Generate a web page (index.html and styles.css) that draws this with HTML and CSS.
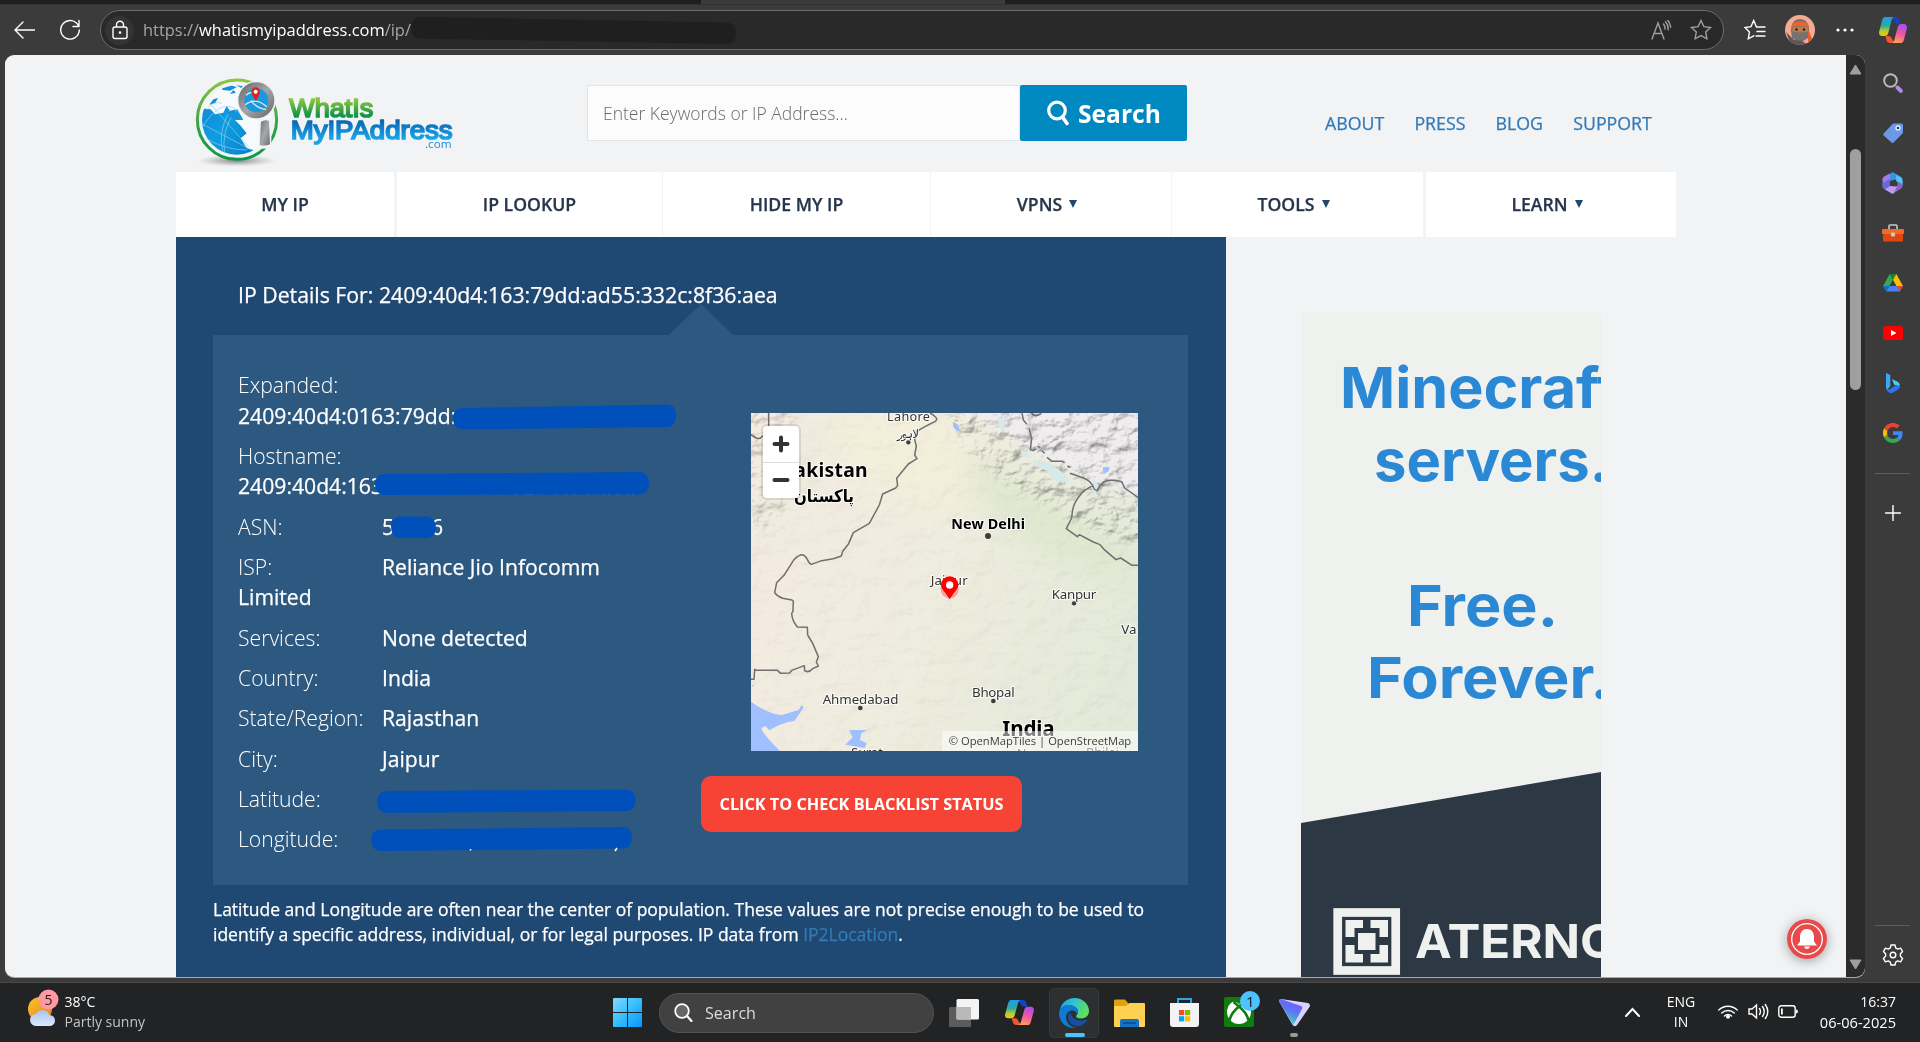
FILE: index.html
```html
<!DOCTYPE html>
<html lang="en">
<head>
<meta charset="utf-8">
<title>IP Details</title>
<link rel="stylesheet" href="styles.css">
</head>
<body>
<svg class="defs" width="0" height="0">
  <defs>
    <linearGradient id="cpA" x1="0" y1="0" x2="0" y2="1"><stop offset="0" stop-color="#1b9df0"/><stop offset=".45" stop-color="#2fa8a0"/><stop offset=".75" stop-color="#b6cf2e"/><stop offset="1" stop-color="#f7c60a"/></linearGradient>
    <linearGradient id="cpB" x1=".6" y1="0" x2=".3" y2="1"><stop offset="0" stop-color="#a850f0"/><stop offset=".5" stop-color="#f0589a"/><stop offset="1" stop-color="#fca35a"/></linearGradient>
    <symbol id="copilot" viewBox="0 0 28 26">
      <path d="M12 0h5c2 0 3 1 3.600 3l1 4h-3c-2 0-3-1-3.500-3Z" fill="#1640c8"/>
      <path d="M16 26h-5c-2 0-3-1-3.600-3l-1-4h3c2 0 3 1 3.500 3Z" fill="#f2552f"/>
      <path d="M6 0h9.500c-1.500 0-2.300 1-2.800 2.800L9.300 16c-.6 2-1.600 3-3.500 3H3C.8 19-.4 17 .2 14.500L3 3.500C3.600 1.200 4.500 0 6 0Z" fill="url(#cpA)"/>
      <path d="M22 26h-9.500c1.500 0 2.300-1 2.800-2.800L18.700 10c.6-2 1.600-3 3.500-3H25c2.200 0 3.400 2 2.800 4.500L25 22.500c-.6 2.300-1.500 3.500-3 3.500Z" fill="url(#cpB)"/>
    </symbol>
  </defs>
</svg>

<div class="tabstrip"><div class="tab-active"></div></div>

<div class="toolbar">
  <svg class="back" width="21" height="18" viewBox="0 0 21 18"><path d="M9 1 1 9l8 8M1 9h20" class="ln"/></svg>
  <svg class="reload" width="22" height="22" viewBox="0 0 22 22"><path d="M19.500 7A9.300 9.300 0 1 0 20.300 11M20 1.500V7.500H14" class="ln"/></svg>
  <div class="address">
    <span class="lock"><svg width="18" height="20" viewBox="0 0 18 20"><rect x="2" y="7" width="14" height="11.500" rx="2" class="ln"/><path d="M5.500 7V4.800a3.500 3.500 0 0 1 7 0V7" class="ln"/><circle cx="9" cy="12.600" r="1.300" fill="#fff"/></svg></span>
    <span class="url">https://<b>whatismyipaddress.com</b>/ip/</span>
    <svg class="url-mask" width="326" height="28" viewBox="0 0 326 28"><path d="M10 0 316 5.500q9 1 9 11t-9 10.500L8 21.500q-8-1-8-11T10 0Z" fill="#1f1f1f"/></svg>
    <div class="address-tools">
      <svg width="21" height="20" viewBox="0 0 21 20"><path d="M1 19 7 3l6 16M3.200 13.500h7.600M12.500 4a7 7 0 0 1 1.500 5M14.500 1.800a10 10 0 0 1 2.600 8M16.800.2a13 13 0 0 1 2.900 7" class="ln dim"/></svg>
      <svg width="22" height="22" viewBox="0 0 22 22"><path d="m11 1.500 2.900 6.100 6.600.9-4.800 4.600 1.200 6.700-5.900-3.200-5.900 3.200 1.200-6.700L1.500 8.500l6.600-.9Z" class="ln dim"/></svg>
    </div>
  </div>
  <div class="tools">
    <svg width="22" height="22" viewBox="0 0 22 22"><path d="M15.500 8h-3L9.700 1.500 7 7.600l-6 .9 4.400 4.600-1.100 6.700 5.400-3M14 8h7M13 12.500h8M12 17h9" class="ln"/></svg>
    <svg width="30" height="30" viewBox="0 0 30 30"><clipPath id="av"><circle cx="15" cy="15" r="15"/></clipPath><g clip-path="url(#av)"><rect width="30" height="30" fill="#f3ab92"/><path d="M6 16C6 8 9.500 4 15 4S24 8 24 15l-1 8-8 5-8-5Z" fill="#77716f"/><path d="M6.500 12C7 8 10 6.500 15 6.500S23 8 24 12q-9-3-17.500 0Z" fill="#f0632a"/><path d="M7.500 12.500q8-2.500 15.500 0v4q-7.500 2-15.500 0Z" fill="#b97b4c"/><circle cx="11.500" cy="14.500" r="1.200" fill="#2b1c14"/><circle cx="19" cy="14.500" r="1.200" fill="#2b1c14"/><path d="M23 14l4 10-4 3Z" fill="#e85a24"/><path d="M1 17 9 25l8 1 6 4H6Z" fill="#5a5756"/></g></svg>
    <svg width="18" height="4" viewBox="0 0 18 4"><circle cx="2" cy="2" r="1.600" fill="#fff"/><circle cx="9" cy="2" r="1.600" fill="#fff"/><circle cx="16" cy="2" r="1.600" fill="#fff"/></svg>
    <svg width="28" height="26"><use href="#copilot"/></svg>
  </div>
</div>

<div class="middle">
  <div class="viewport">
    <div class="web">
      <header class="site-header">
        <svg class="logo" width="290" height="100" viewBox="0 0 870 300">
          <defs>
            <linearGradient id="ring" x1="0" y1="0" x2="0" y2="1"><stop offset="0" stop-color="#8cc63f"/><stop offset=".6" stop-color="#2fa24a"/><stop offset="1" stop-color="#0a9a48"/></linearGradient>
            <linearGradient id="sea" x1="0" y1="0" x2="1" y2="1"><stop offset="0" stop-color="#1183d2"/><stop offset=".5" stop-color="#0f9de0"/><stop offset="1" stop-color="#0a7cc8"/></linearGradient>
            <linearGradient id="lens" x1="0" y1="0" x2="1" y2="1"><stop offset="0" stop-color="#6d6f72"/><stop offset=".5" stop-color="#a5a7aa"/><stop offset="1" stop-color="#6d6f72"/></linearGradient>
            <linearGradient id="wG" x1="0" y1="0" x2="0" y2="1"><stop offset=".2" stop-color="#8cc63f"/><stop offset=".8" stop-color="#0f9347"/></linearGradient>
            <linearGradient id="wB" x1="0" y1="0" x2="0" y2="1"><stop offset=".2" stop-color="#0b68b5"/><stop offset=".8" stop-color="#17a3e6"/></linearGradient>
            <radialGradient id="shd"><stop offset="0" stop-color="#666" stop-opacity=".8"/><stop offset="1" stop-color="#999" stop-opacity="0"/></radialGradient>
            <clipPath id="gl"><circle cx="170" cy="150" r="104"/></clipPath>
          </defs>
          <ellipse cx="170" cy="272" rx="118" ry="18" fill="url(#shd)"/>
          <circle cx="171" cy="149" r="119" fill="#f1f3f5" stroke="url(#ring)" stroke-width="9"/>
          <g clip-path="url(#gl)">
            <rect x="60" y="40" width="220" height="220" fill="#f7fafc"/>
            <path d="M60 115 92 118 105 133 130 128 140 108 150 122 172 118 190 150 165 150 180 165 200 190 182 205 200 235 220 240 210 265 90 265 60 180ZM118 48 150 44 170 52 150 62 128 60ZM168 46 230 48 200 62Z" fill="url(#sea)"/>
            <path d="M62 180Q120 80 170 120 120 180 135 256M62 160Q120 190 215 240M70 200q60 40 130 40M90 100q60 70 115 130M150 120q-40 70-20 130M80 120q20-30 45-20" fill="none" stroke="#8fd0f3" stroke-width="2"/>
            <path d="M140 128l22-8 18 22-22 4ZM88 104l12-16 14-4-8 14ZM150 72l10-12 8 8Z" fill="#1590da"/>
          </g>
          <g>
            <rect x="236" y="146" width="38" height="90" fill="#f1f3f5"/>
            <path d="M243 155q12-8 24-2l3 70q-14 6-31 2Z" fill="url(#lens)"/>
            <circle cx="229" cy="91" r="59" fill="#f1f3f5"/>
            <circle cx="229" cy="91" r="45" fill="#1c98de" stroke="url(#lens)" stroke-width="18"/>
            <path d="M198 76q14-14 28-6M196 104q30-24 64 6M212 92q20 24 46 26" fill="none" stroke="#d9eefa" stroke-width="4"/>
            <path d="M228 94C220 78 214 72 214 65a13 13 0 0 1 26 0c0 7-6 15-12 29Z" fill="#d9251c"/><circle cx="227" cy="65" r="6" fill="#fff"/>
          </g>
          <text x="328" y="140" font-size="77" textLength="252" lengthAdjust="spacingAndGlyphs" fill="url(#wG)" stroke="url(#wG)" class="brand">WhatIs</text>
          <text x="332" y="206" font-size="77" textLength="486" lengthAdjust="spacingAndGlyphs" fill="url(#wB)" stroke="url(#wB)" class="brand">MyIPAddress</text>
          <text x="735" y="235" font-size="34" textLength="80" lengthAdjust="spacingAndGlyphs" fill="#1b8fd2" class="brand-com">.com</text>
        </svg>
        <div class="search">
          <div class="search-input">Enter Keywords or IP Address...</div>
          <div class="search-btn"><svg width="22" height="26" viewBox="0 0 22 26"><circle cx="10" cy="10.500" r="8.300" fill="none" stroke="#fff" stroke-width="3.200"/><path d="m15.500 17 4.500 6.500" stroke="#fff" stroke-width="3.600" stroke-linecap="round"/></svg><span>Search</span></div>
        </div>
        <div class="toplinks"><a>ABOUT</a><a>PRESS</a><a>BLOG</a><a>SUPPORT</a></div>
      </header>

      <nav class="nav">
        <div>MY IP</div><div>IP LOOKUP</div><div>HIDE MY IP</div><div class="drop">VPNS<i></i></div><div class="drop">TOOLS<i></i></div><div class="drop">LEARN<i></i></div>
      </nav>

      <div class="columns">
        <main class="details">
          <h1>IP Details For: 2409:40d4:163:79dd:ad55:332c:8f36:aea</h1>
          <section class="panel">
            <div class="info">
              <p class="long"><span class="block">Expanded:</span><b>2409:40d4:0163:79dd:</b></p>
              <p class="host"><span class="block">Hostname:</span><b>2409:40d4:163:79dd:ad55:332c:8f36:aea</b></p>
              <p><span>ASN:</span><b class="asn">5<em>6</em></b></p>
              <p><span>ISP:</span><b>Reliance Jio Infocomm<br>Limited</b></p>
              <p><span>Services:</span><b>None detected</b></p>
              <p><span>Country:</span><b>India</b></p>
              <p><span>State/Region:</span><b>Rajasthan</b></p>
              <p><span>City:</span><b>Jaipur</b></p>
              <p><span>Latitude:</span></p>
              <p><span>Longitude:</span></p>
            </div>
            <div class="map-col">
              <div class="map">
                <svg width="387" height="338" viewBox="33 39 1161 1014">
                  <defs>
                    <linearGradient id="land" x1="0" y1=".3" x2="1" y2=".6"><stop offset="0" stop-color="#f5ebe1"/><stop offset=".45" stop-color="#efeddf"/><stop offset="1" stop-color="#e4ead9"/></linearGradient>
                    <filter id="blur"><feGaussianBlur stdDeviation="14"/></filter>
                    <filter id="soft"><feGaussianBlur stdDeviation="40"/></filter>
                    <filter id="relief" x="0" y="0" width="100%" height="100%" color-interpolation-filters="sRGB"><feTurbulence type="fractalNoise" baseFrequency=".016 .022" numOctaves="4" seed="8"/><feDiffuseLighting surfaceScale="11" lighting-color="#fff" diffuseConstant="1.120"><feDistantLight azimuth="225" elevation="62"/></feDiffuseLighting></filter>
                    <mask id="mt"><g filter="url(#blur)"><path d="M620 20 1220 20 1220 440 1080 400 900 310 740 210 660 110Z" fill="#ccc"/><path d="M0 0H170L150 120 130 350 90 400 0 330Z" fill="#777"/></g></mask>
                    <mask id="low"><rect x="0" y="0" width="1300" height="1100" fill="#121212"/></mask>
                  </defs>
                  <rect x="33" y="39" width="1161" height="1014" fill="url(#land)"/>
                  <g filter="url(#soft)"><path d="M180 40 640 20 760 300 560 330 350 250Z" fill="#f3efdb"/><path d="M680 150 1200 460V560L860 440 700 280Z" fill="#e0e8d0"/><path d="M60 120 260 0 300 260 60 500Z" fill="#efecdf"/></g>
                  <path d="M640 20 1220 20 1220 300 1040 240 900 160 760 80Z" fill="#f0edef" filter="url(#blur)"/>
                  <rect x="33" y="39" width="1161" height="1014" filter="url(#relief)" mask="url(#mt)" class="shade"/>
                  <rect x="33" y="39" width="1161" height="1014" filter="url(#relief)" mask="url(#low)" class="shade"/>
                  <g fill="#d7e8ea"><path d="M775 46l20 24-6 30-14-30ZM842 150l22 6 8 18-26-6ZM884 180l50 12 40 30 14 28-44-8-24-30-36-16ZM1062 236l12 18-10 34-12-28ZM1132 250l16 18-8 10ZM1174 296l20 26v14Z"/></g>
                  <g fill="#a0bfff"><path d="M638 66 652 72 660 90 652 94 640 82ZM1089 202l17-2v14l-12 6-5-6ZM33 905Q80 940 125 945L176 930 184 916 191 922 164 962Q120 970 88 991L76 978 64 984Q66 1000 120 1053H33ZM33 860 47 848 38 860ZM327 990H382L364 1000 360 1020 380 1030 374 1044 316 1034 338 1012Z"/></g>
                  <g class="border">
                    <path d="M86 39V105L68 108Q55 125 33 103M570 39Q600 55 585 65 570 72 540 88L528 98 524 118 529 138 524 165 531 176 505 192 470 235 473 256 467 264 428 282 418 315 388 370 340 398 325 433 308 454 304 468 280 476 245 482 214 493Q206 490 202 478 195 464 184 464 170 468 160 482L132 526 110 548 104 578Q112 590 128 595L156 600 160 604 159 634 155 640Q156 662 172 681L202 682 203 705 218 730 235 770 229 786 235 798 218 806Q205 820 194 812L193 797 155 811 149 819 122 820 112 811 50 811 44 808 42 838H33"/>
                    <path d="M846 39 850 60 860 72M867 85l8 30-4 34 8 3 9-5M893 138l8 6M906 152l8 8M921 172l15 12 30 0 8 4M982 198l9 5M990 220 1020 230Q1040 236 1050 246 1060 256 1063 268L1072 272Q1080 255 1090 246 1110 236 1145 245L1154 264 1194 292M1060 256Q1030 270 1020 286 1000 310 997 336L995 354 979 386 1012 410 1018 404 1060 426 1080 434 1092 448 1128 479 1142 474 1176 496H1194M874 39Q886 54 904 40"/>
                  </g>
                  <g class="lbl">
                    <text x="441" y="62" font-size="38" textLength="129">Lahore</text><text x="471" y="114" font-size="36" textLength="66">لاہور</text>
                    <text x="572" y="556" font-size="40" textLength="111">Jaipur</text><text x="935" y="597" font-size="40" textLength="134">Kanpur</text>
                    <text x="1144" y="702" font-size="40">Va</text><text x="248" y="911" font-size="40" textLength="227">Ahmedabad</text>
                    <text x="696" y="890" font-size="40" textLength="128">Bhopal</text><text x="334" y="1071" font-size="38">Surat</text><text x="830" y="1073" font-size="38">Na</text><text x="1038" y="1072" font-size="38">Bhilai</text>
                  </g>
                  <g class="lbl heavy">
                    <text x="126" y="231" font-size="58" textLength="257">Pakistan</text><text x="162" y="305" font-size="52" textLength="180" lengthAdjust="spacingAndGlyphs" class="urdu">پاکستان</text>
                    <text x="634" y="388" font-size="43" textLength="221">New Delhi</text><text x="787" y="1007" font-size="62" textLength="157">India</text>
                  </g>
                  <g fill="#3d3d3d"><circle cx="505" cy="127" r="6.500"/><circle cx="744" cy="408" r="9"/><circle cx="1002" cy="610" r="6.500"/><circle cx="361" cy="924" r="7"/><circle cx="760" cy="903" r="7"/></g>
                  <circle cx="629" cy="568" r="27" fill="#f00" opacity=".3"/>
                  <path d="M629 598C617 577 603 568 603 555a26 26 0 0 1 52 0c0 13-14 22-26 43Z" fill="#f00"/><circle cx="629" cy="555" r="11" fill="#fff"/>
                </svg>
                <div class="zoom"><svg width="36" height="72" viewBox="0 0 36 72"><path d="M11.500 18h13M18 11.500v13M11.500 54h13" stroke="#333" stroke-width="4" stroke-linecap="round"/><path d="M0 36.500h36" stroke="#ddd"/></svg></div>
                <div class="credit">© OpenMapTiles | OpenStreetMap</div>
              </div>
            </div>
            <div class="blacklist">CLICK TO CHECK BLACKLIST STATUS</div>
            <svg class="masks" width="320" height="460" viewBox="365 400 320 460" fill="#0050bb">
              <path d="M462 408 668 404.500q8 1 8 11t-8 11.500L462 429.500q-9-1-9-11t9-10.500ZM385 474 640 472q9 1 9 11t-9 11.500L384 495q-9-1-9-11t10-10ZM399 516.500h29q8 2 8 11t-8 10.500h-29q-8-2-8-11t8-10.500ZM386 791 627 789.500q8.500 1 8.500 11t-8.500 10.500L386 813q-9-1-9-11t9-11ZM381 829.500 624 827q8 1 8 11t-8 10.500L381 851q-10-1-10-11t10-10.500Z"/>
              <path d="m615 851 2-3M470.500 849v1.500" stroke="#fff" stroke-width="1.500"/>
            </svg>
          </section>
          <p class="note">Latitude and Longitude are often near the center of population. These values are not precise enough to be used to<br>identify a specific address, individual, or for legal purposes. IP data from <a>IP2Location</a>.</p>
        </main>

        <aside class="ad">
          <svg width="300" height="664" viewBox="0 0 300 664">
            <rect width="300" height="664" fill="#eff1ee"/>
            <path d="M0 510 300 459V664H0Z" fill="#2c3843"/>
            <g class="ad-text">
              <text x="39" y="95" font-size="57" textLength="279" lengthAdjust="spacingAndGlyphs">Minecraft</text>
              <text x="73" y="167.500" font-size="57" textLength="235" lengthAdjust="spacingAndGlyphs">servers.</text>
              <text x="106" y="312.500" font-size="57" textLength="151" lengthAdjust="spacingAndGlyphs">Free.</text>
              <text x="66" y="384.500" font-size="57" textLength="244" lengthAdjust="spacingAndGlyphs">Forever.</text>
            </g>
            <g fill="none" stroke="#eff1ee"><rect x="36.700" y="599.500" width="58" height="58" stroke-width="8.700"/></g>
            <g fill="#eff1ee"><path d="M44.500 607h17.500v8h-8.500v9h-9ZM69.500 607h17.500v17h-8.500v-9h-9ZM44.500 649.500v-17.500h9v9h8.500v8.500ZM87 649.500v-17.500h-8.500v9h-9v8.500ZM57 620h17.500v17H57Z"/></g>
            <text x="114" y="645" font-size="47" textLength="203" lengthAdjust="spacingAndGlyphs" class="ad-brand">ATERNO</text>
          </svg>
        </aside>
      </div>

      <div class="bell"><svg width="40" height="40" viewBox="0 0 40 40"><circle cx="20" cy="20" r="20" fill="#e84a4b"/><circle cx="20" cy="20" r="15.300" fill="none" stroke="#fff" stroke-width="1.300"/><path d="M20 10c4.500 0 7 3.500 7 8v4.500l3 4H10l3-4V18c0-4.500 2.500-8 7-8ZM17 27.500h6q-1 2.500-3 2.500t-3-2.500Z" fill="#fff"/></svg></div>
    </div>
    <div class="scrollbar">
      <svg width="13" height="11" viewBox="0 0 13 11"><path d="M6.500 1 12 10H1Z" fill="#9f9f9f" stroke="#9f9f9f" stroke-linejoin="round"/></svg>
      <div class="thumb"></div>
      <svg class="down" width="13" height="11" viewBox="0 0 13 11"><path d="M6.500 10 12 1H1Z" fill="#9f9f9f" stroke="#9f9f9f" stroke-linejoin="round"/></svg>
    </div>
  </div>

  <div class="sidebar">
    <div><svg width="20" height="20" viewBox="0 0 20 20"><path d="m14.500 14.500 3.300 3.300" stroke="#b58be8" stroke-width="4" stroke-linecap="round"/><circle cx="7.500" cy="7.500" r="6.300" fill="none" stroke="#b9b9b9" stroke-width="2"/></svg></div>
    <div><svg width="20" height="20" viewBox="0 0 20 20"><path d="M10 .5h8.500q1.500 0 1.500 1.500v8L10.500 19.500q-1 1-2 0L.7 12.500q-1-1 0-2Z" fill="#6a9ae6"/><circle cx="15" cy="5" r="2" fill="#2c3a55" stroke="#e8eefb" stroke-width="1.400"/></svg></div>
    <div><svg width="21" height="22" viewBox="0 0 21 22"><path d="M10.500 0 19 4.800q1.500 1 1.500 3V13L13 7.500 8 9V2Z" fill="#3f8fe4"/><path d="m14 3 5 2.800q1.500 1 1.500 3V13.500l-6-4Z" fill="#4ccaf5"/><path d="M8 1.500V14l-5 3.500-1.500-1Q.5 15.500.5 14V7.500q0-2 1.500-3Z" fill="#a07be0"/><path d="M8 7v7l-5 3.500-1.500-1Q.5 15.500.5 14v-3Z" fill="#4f62d8" opacity=".7"/><path d="M20.500 12v2q0 1.500-1.500 2.500L12 21q-1.500 1-3 0l-6-3.500L8 14l4.500 1.500 3-2V9.500Z" fill="#8c63c4"/><path d="m12 21 3-6.500-7-.5-5 3.500L9 21q1.500 1 3 0Z" fill="#c09af0"/></svg></div>
    <div><svg width="22" height="18" viewBox="0 0 22 18"><path d="M7 5V2q0-1 1-1h6q1 0 1 1v3" fill="none" stroke="#c9c9c9" stroke-width="1.600"/><rect x="1" y="6" width="20" height="11.500" rx="1.200" fill="#e0470f"/><rect y="5" width="22" height="5" rx="1" fill="#f26a24"/><circle cx="11" cy="10.500" r="2.300" fill="#c6c6c6"/></svg></div>
    <div><svg width="20" height="18" viewBox="0 0 20 18"><path d="M6.700 0 10 5.700 3.300 17.500 0 12Z" fill="#34a853"/><path d="M6.700 0h6.600L10 5.700Z" fill="#188038"/><path d="M13.300 0 20 12h-6.600L10 5.700Z" fill="#fbbc04"/><path d="M6.600 12H20l-3.300 5.500H3.300Z" fill="#4285f4"/><path d="M0 12h6.600l-3.300 5.500Z" fill="#1967d2"/><path d="M13.400 12H20l-3.300 5.500Z" fill="#ea4335"/></svg></div>
    <div><svg width="20" height="14" viewBox="0 0 20 14"><rect width="20" height="14" rx="3" fill="#f00"/><path d="m8 4 5.500 3L8 10Z" fill="#fff"/></svg></div>
    <div><svg width="14" height="20" viewBox="0 0 14 20"><path d="M0 0 4.300 2v11L1 17Q0 16 0 15Z" fill="#3ba7f5"/><path d="m6 6 6 3q2 1.500 2 4l-3.500-.5L8 11.500Z" fill="#3cd4ee"/><path d="M14 12.500q0 3-2.500 4.500L7 19.500q-2 1-4 0t-3-4l3.500 1 6-4Z" fill="#2c74ee"/></svg></div>
    <div><svg width="20" height="20" viewBox="0 0 48 48"><path fill="#ea4335" d="M24 9.500c3.540 0 6.710 1.220 9.210 3.600l6.850-6.850C35.900 2.380 30.470 0 24 0 14.620 0 6.510 5.380 2.560 13.220l7.980 6.190C12.430 13.720 17.740 9.500 24 9.500z"/><path fill="#4285f4" d="M46.980 24.550c0-1.570-.15-3.090-.38-4.550H24v9.020h12.940c-.58 2.960-2.260 5.480-4.780 7.180l7.730 6c4.510-4.180 7.090-10.360 7.090-17.650z"/><path fill="#fbbc05" d="M10.530 28.590a14.500 14.500 0 0 1 0-9.180l-7.980-6.190a24 24 0 0 0 0 21.560l7.980-6.190z"/><path fill="#34a853" d="M24 48c6.480 0 11.930-2.130 15.890-5.810l-7.730-6c-2.150 1.450-4.920 2.300-8.160 2.300-6.260 0-11.570-4.220-13.470-9.910l-7.980 6.190C6.510 42.620 14.620 48 24 48z"/></svg></div>
    <hr>
    <div class="plus"><svg width="16" height="16" viewBox="0 0 16 16"><path d="M8 .5v15M.5 8h15" class="ln"/></svg></div>
    <hr class="lower">
    <div class="gear"><svg width="22" height="22" viewBox="0 0 22 22"><path d="M9 1h4l.7 2.900 2 1.200 2.900-.9 2 3.400-2.200 2.100v2.600l2.200 2.100-2 3.400-2.900-.9-2 1.200L13 21H9l-.7-2.900-2-1.200-2.900.9-2-3.400 2.200-2.100V9.700L1.400 7.600l2-3.400 2.900.9 2-1.200Z" class="ln" stroke-linejoin="round"/><circle cx="11" cy="11" r="2.800" class="ln"/></svg></div>
  </div>
</div>

<footer class="taskbar">
  <div class="weather">
    <svg width="34" height="40" viewBox="0 0 34 40"><defs><linearGradient id="sun" x1="0" y1="0" x2="1" y2="1"><stop offset="0" stop-color="#f7c62f"/><stop offset="1" stop-color="#ee7a1b"/></linearGradient><linearGradient id="cloud" x1="0" y1="0" x2="0" y2="1"><stop offset="0" stop-color="#a9c4f2"/><stop offset="1" stop-color="#dbe8fd"/></linearGradient></defs><circle cx="12" cy="20" r="12" fill="url(#sun)"/><path d="M8 37a6 6 0 0 1 0-12 7.500 7.500 0 0 1 13.500 1A5.500 5.500 0 0 1 21.500 37Z" fill="url(#cloud)"/><circle cx="20.500" cy="10.500" r="10" fill="#ff99a4"/><text x="16.500" y="15.500" font-size="14" fill="#222">5</text></svg>
    <div><span>38°C</span><span class="muted">Partly sunny</span></div>
  </div>
  <div class="apps">
    <svg class="win" width="29" height="29" viewBox="0 0 29 29"><defs><linearGradient id="wn" x1="0" y1="0" x2="1" y2="1"><stop offset="0" stop-color="#7fdcff"/><stop offset=".5" stop-color="#37bdfb"/><stop offset="1" stop-color="#0795f7"/></linearGradient></defs><path d="M1 0h13v14H0V1q0-1 1-1ZM15 0h13q1 0 1 1v13H15ZM0 15h14v14H1q-1 0-1-1ZM15 15h14v13q0 1-1 1H15Z" fill="url(#wn)"/></svg>
    <div class="tsearch"><svg width="19" height="19" viewBox="0 0 19 19"><circle cx="8" cy="8" r="6.800" fill="#666" stroke="#fff" stroke-width="1.800"/><path d="m13 13 4.500 5" stroke="#fff" stroke-width="2.200" stroke-linecap="round"/></svg>Search</div>
    <div class="app"><svg width="30" height="28" viewBox="0 0 30 28"><rect y="8" width="22" height="20" rx="1.500" fill="#5c5c5c"/><rect x="7.500" width="22.500" height="20.500" rx="1.500" fill="#f4f4f4"/><path d="M7.500 8H22v12.500H7.500Z" fill="#b9b9b9"/></svg></div>
    <div class="app"><svg width="29" height="25" viewBox="0 0 28 26" preserveAspectRatio="none"><use href="#copilot" width="28" height="26"/></svg></div>
    <div class="app active"><svg width="30" height="30" viewBox="0 0 30 30"><defs><linearGradient id="eg" x1="0" y1="0" x2="1" y2=".4"><stop offset="0" stop-color="#1d9ee8"/><stop offset=".5" stop-color="#31c4cf"/><stop offset="1" stop-color="#5fe05e"/></linearGradient></defs><path d="M1 12C2 5 8 0 15.500 0 24 0 30 6.500 30 13c0 5-3.500 7.500-8 7.500-3.500 0-5-1.200-5-2.200s2-1.800 2-4.800c0-3.500-4-6-8.500-6C6 7.500 2.500 9.500 1 12Z" fill="url(#eg)"/><path d="M0 15c0-5 4.500-8 9.500-8 6 0 9.500 3 9.500 6.500 0 1-.3 2-.8 2.700-.8-2.700-3-3.700-5.200-3.700-4 0-6.500 4-5.800 8.500C8 26 12 29 17 29.800 7 31 0 24 0 15Z" fill="#0f79d4"/><path d="M11 14c-3 3-2.500 9 2 12.500 5 3.500 11.500 1.500 15-4 .4-.8-.2-1.200-1-.8-6 2.800-14 .3-16-7.700Z" fill="#1250a5"/></svg><i></i></div>
    <div class="app"><svg width="31" height="28" viewBox="0 0 31 28"><path d="M0 2q0-1.500 1.500-1.500H11L14 4v6H0Z" fill="#e0a010"/><path d="M0 7h12l3-3h15q1 0 1 1v22q0 1-1 1H1q-1 0-1-1Z" fill="#ffd152"/><path d="M6 28v-6q0-2 2-2h15q2 0 2 2v6Z" fill="#1571c4"/><path d="M9 24h13" stroke="#0b4a8c" stroke-width="1.500"/></svg></div>
    <div class="app"><svg width="29" height="30" viewBox="0 0 29 30"><path d="M8 7V1h13v6" fill="none" stroke="#2aa9ea" stroke-width="2"/><path d="M0 5h29v21q0 3-3 3H3q-3 0-3-3Z" fill="#f3f3f3"/><path d="M9 12h5.200v5.200H9Z" fill="#f25022"/><path d="M15 12h5.200v5.200H15Z" fill="#7fba00"/><path d="M9 18.200h5.200v5.200H9Z" fill="#00a4ef"/><path d="M15 18.200h5.200v5.200H15Z" fill="#ffb900"/></svg></div>
    <div class="app"><svg class="xbox" width="38" height="38" viewBox="0 0 38 38"><rect y="6" width="30" height="30" rx="2" fill="#107c10"/><circle cx="15" cy="21" r="12" fill="#fff"/><path d="M8 11q4-1 7 2 3-3 7-2-3-3-7-3t-7 3Z" fill="#107c10"/><path d="M15 15.500Q7 22 5.500 29.500M15 15.500q8 6.500 9.500 14M15 15.500 9.500 11M15 15.500 20.500 11" fill="none" stroke="#107c10" stroke-width="2.600"/><circle cx="26" cy="10" r="10" fill="#4cc2ff"/><text x="22" y="15.500" font-size="15" fill="#1a1a1a">1</text></svg></div>
    <div class="app"><svg width="31" height="28" viewBox="0 0 31 28"><defs><linearGradient id="vp" x1=".8" y1="0" x2=".4" y2="1"><stop offset="0" stop-color="#7a55ff"/><stop offset=".5" stop-color="#5a78f5"/><stop offset="1" stop-color="#48e0b8"/></linearGradient></defs><path d="M2 0 29 4q3 1 1.500 4L18 26q-2.500 3-5-1L.5 3Q-.5 0 2 0Z" fill="#d9d2ff"/><path d="M2 0 22 7q2 1 1 3l-7 13-2 3L.5 3Q-.5 0 2 0Z" fill="url(#vp)"/></svg><i class="dot"></i></div>
  </div>
  <div class="tray">
    <svg width="15" height="10" viewBox="0 0 15 10"><path d="m1 9 6.500-7L14 9" class="ln thick"/></svg>
    <div class="lang"><span>ENG</span><span>IN</span></div>
    <div class="status">
      <svg width="20" height="15" viewBox="0 0 20 15"><path d="M.8 6a13 13 0 0 1 18.400 0M3.700 9a9 9 0 0 1 12.600 0M6.500 12a5 5 0 0 1 7 0" class="ln"/><circle cx="10" cy="12.800" r="2" fill="#fff"/></svg>
      <svg width="21" height="17" viewBox="0 0 21 17"><path d="M1 6h3l4.500-4v13L4 11H1ZM11.500 5.500q2 3 0 6M14.500 3.500q3.500 5 0 10M17.300 1.500q5 7 0 14" class="ln"/></svg>
      <svg width="20" height="13" viewBox="0 0 20 13"><rect x=".8" y=".8" width="16.400" height="11.400" rx="2.500" class="ln"/><path d="M3 3.500h1.800v6H3Z" fill="#fff"/><path d="M18 4.500q2 0 2 2t-2 2Z" fill="#fff"/></svg>
    </div>
    <div class="clock"><span class="time">16:37</span><span>06-06-2025</span></div>
  </div>
</footer>
</body>
</html>
```
FILE: styles.css
```css
* { box-sizing: border-box; }
body { margin: 0; width: 1920px; height: 1042px; overflow: hidden; background: #3b3b3b; font-family: "Open Sans", "Noto Sans", sans-serif; color: #fff; display: flex; flex-direction: column; }
svg { display: block; flex: none; }
.defs { position: absolute; }
.ln { fill: none; stroke: #fff; stroke-width: 1.4; stroke-linecap: round; }
.dim { stroke: #a0a0a0; }
.thick { stroke-width: 2; }

.tabstrip { height: 4px; background: #1f1f1f; padding-left: 701px; flex: none; }
.tab-active { width: 304px; height: 4px; background: #3b3b3b; }

.toolbar { height: 51px; flex: none; display: flex; align-items: center; padding: 0 13px 0 14px; border-top: 1px solid #303030; }
.reload { margin-left: 24px; }
.address { margin-left: 19px; width: 1625px; height: 40px; border: 1px solid #6c6c6c; border-radius: 20px; background: #292929; display: flex; align-items: center; padding: 0 11px 0 4px; }
.lock { width: 29px; height: 29px; border-radius: 50%; background: #343434; display: flex; align-items: center; justify-content: center; }
.url { margin-left: 9px; font-size: 16.45px; color: #a6a6a6; white-space: nowrap; line-height: 24px; margin-top: -1px; }
.url b { font-weight: 400; color: #fff; }
.url-mask { margin-top: 1px; }
.address-tools { margin-left: auto; display: flex; gap: 18px; align-items: center; }
.tools { display: flex; align-items: center; margin-left: 20px; }
.tools svg:nth-child(2) { margin-left: 19px; }
.tools svg:nth-child(3) { margin-left: 21px; }
.tools svg:nth-child(4) { margin-left: 25px; }

.middle { height: 922px; flex: none; display: flex; padding-left: 5px; }
.viewport { width: 1860px; height: 922px; display: flex; border-radius: 9px; overflow: hidden; background: #f1f3f5; box-shadow: 0 1px 0 #a8a8a8; }
.web { width: 1841px; padding-left: 171px; flex: none; position: relative; }
.site-header { height: 117px; width: 1500px; display: flex; align-items: flex-start; }
.logo { margin: 15px 0 0 4px; }
.brand { font-family: "Liberation Sans", Arial, sans-serif; font-weight: 400; stroke-width: 5; }
.brand-com { font-family: "Open Sans", sans-serif; }
.search { display: flex; margin: 30px 0 0 117px; height: 56px; }
.search-input { width: 433px; border: 1px solid #e2e5e7; background: #fcfcfc; color: #6a6a6a; font-weight: 300; font-size: 17.5px; line-height: 55px; padding-left: 15px; }
.search-btn { width: 167px; background: #0088c1; border-radius: 2px; font-weight: 700; font-size: 24.6px; line-height: 56px; display: flex; align-items: center; gap: 9px; padding-left: 27px; }
.search-btn span { padding-top: 1px; }
.toplinks { display: flex; gap: 30.2px; margin: 55px 0 0 138px; font-size: 17.75px; line-height: 26px; color: #337ab7; }
.toplinks, .details h1, .info b, .note, .nav div { -webkit-text-stroke-width: .25px; }

.nav { width: 1500px; height: 65px; display: grid; grid-template-columns: 221px 266px 268px 241px 254px 250px; }
.nav div { background: #fff; border-right: 1.5px solid #f1f3f5; color: #26354a; font-weight: 600; font-size: 17.65px; line-height: 24px; display: flex; align-items: center; justify-content: center; padding-bottom: 2px; }
.nav div:nth-child(1), .nav div:nth-child(5) { border-right-width: 3px; }
.nav div:last-child { border-right: 0; }
.nav .drop { padding-right: 8px; }
.nav i { border: 4px solid transparent; border-top: 8px solid #1f4972; border-bottom: 0; margin: 1px 0 0 7px; }

.columns { display: flex; width: 1670px; }
.details { width: 1050px; height: 740px; background: #1f4972; padding: 0 38px 0 37px; }
.details h1 { margin: 0; height: 98px; padding: 43px 0 0 25px; font-size: 21.25px; line-height: 30px; font-weight: 400; white-space: nowrap; }
.panel { position: relative; width: 975px; height: 550px; background: #2d5980; padding: 34.5px 0 0 25px; display: grid; grid-template-columns: 513px 1fr; grid-template-rows: 406px 56px; }
.panel::before { content: ""; position: absolute; left: 456px; top: -31px; border: 32px solid transparent; border-bottom: 31px solid #2d5980; border-top: 0; }
.info { grid-row: 1 / 3; font-size: 21.16px; line-height: 30px; display: flex; flex-direction: column; gap: 10.3px; }
.info p { margin: 0; }
.info .long { line-height: 31px; margin-top: -.5px; }
.info .host { margin: -.5px 0 1px; }
.info span { display: inline-block; width: 144px; font-weight: 300; white-space: nowrap; }
.info .block { display: block; }
.info b { font-weight: 400; }
.asn em { font-style: normal; margin-left: 37px; }
.map { position: relative; width: 387px; height: 338px; margin-top: 43.5px; overflow: hidden; }
.shade { mix-blend-mode: multiply; }
.border { fill: none; stroke: #6f6f6f; stroke-width: 4.5; stroke-linejoin: round; }
.lbl { font-family: "Noto Sans", "DejaVu Sans", sans-serif; fill: #333; stroke: #fff; stroke-opacity: .8; stroke-width: 6; paint-order: stroke; }
.heavy { font-weight: 700; fill: #000; }
.urdu { font-weight: 700; font-family: "DejaVu Sans", sans-serif; }
.zoom { position: absolute; left: 12px; top: 13px; background: #fff; border-radius: 4px; box-shadow: 0 0 0 2px rgba(0,0,0,.1); }
.credit { position: absolute; right: 0; bottom: 0; height: 20px; width: 196px; background: rgba(255,255,255,.5); color: #404040; font-size: 11.2px; line-height: 20px; text-align: center; white-space: nowrap; }
.blacklist { grid-column: 2; margin: 0 0 0 -50px; width: 321px; height: 56px; background: #f74336; border-radius: 10px; font-weight: 700; font-size: 16.25px; line-height: 56.5px; text-align: center; white-space: nowrap; }
.masks { position: absolute; left: 152px; top: 65px; }
.note { margin: 12px 0 0; font-size: 17.5px; line-height: 25px; white-space: nowrap; }
.note a { color: #337ab7; }

.ad { margin: 76px 0 0 75px; width: 300px; }
.ad-text { fill: #2b88d4; }
.ad-text, .ad-brand { font-family: Inter, "DejaVu Sans", sans-serif; font-weight: 700; }
.ad-brand { fill: #eff1ee; }
.bell { position: absolute; left: 1782px; top: 864px; width: 40px; height: 40px; border-radius: 50%; box-shadow: 0 2px 12px rgba(0,0,0,.35); }

.scrollbar { width: 19px; background: #2b2b2b; display: flex; flex-direction: column; align-items: center; padding: 9px 1px 7px 0; }
.scrollbar .thumb { width: 11px; height: 241px; border-radius: 6px; background: #9f9f9f; margin-top: 74px; }
.scrollbar .down { margin-top: auto; }

.sidebar { width: 55px; display: flex; flex-direction: column; align-items: center; padding-top: 3px; }
.sidebar div { height: 50px; flex: none; display: flex; align-items: center; }
.sidebar hr { width: 35px; height: 1px; border: 0; background: #5c5c5c; margin: 15px 0 0; flex: none; }
.sidebar .plus { height: 30px; margin-top: 24px; }
.sidebar .lower { margin-top: auto; }
.sidebar .gear { height: 22px; margin: 18px 0 11px; }

.taskbar { margin-top: 5px; height: 60px; background: #222324; border-top: 1px solid #484848; display: flex; position: relative; font-size: 14px; line-height: 20px; }
.taskbar span { display: block; white-space: nowrap; }
.weather { display: flex; width: 613px; padding: 6px 0 0 28px; }
.weather > div { margin: 3px 0 0 2.500px; }
.muted { color: #c4c4c4; }
.apps { display: flex; align-items: center; width: 720px; }
.tsearch { margin-left: 17px; width: 275px; height: 40px; border-radius: 20px; background: #414142; border: 1px solid #535353; display: flex; align-items: center; gap: 12px; padding-left: 14px; font-size: 16.1px; color: #dcdcdc; margin-right: 2px; }
.app { width: 50px; height: 50px; margin-left: 5px; display: flex; align-items: center; justify-content: center; position: relative; border-radius: 5px; flex: none; }
.tsearch + .app { margin-left: 3px; }
.active { background: #2e2f30; border: 1px solid #383939; }
.app i { position: absolute; left: 15px; bottom: 0; width: 20px; height: 4px; border-radius: 2px; background: #4cc2ff; }
.app .dot { left: 21px; bottom: 1px; width: 8px; background: #9a9a9a; }
.xbox { margin: -6px -8px 0 0; }
.tray { margin-left: auto; display: flex; align-items: center; padding: 0 24px 2px 0; }
.lang { margin-left: 26px; text-align: center; width: 30px; }
.status { display: flex; align-items: center; gap: 9.5px; margin-left: 22px; width: 82px; }
.clock { width: 96px; text-align: right; font-size: 14.6px; }
.time { font-size: 14px; }
```
